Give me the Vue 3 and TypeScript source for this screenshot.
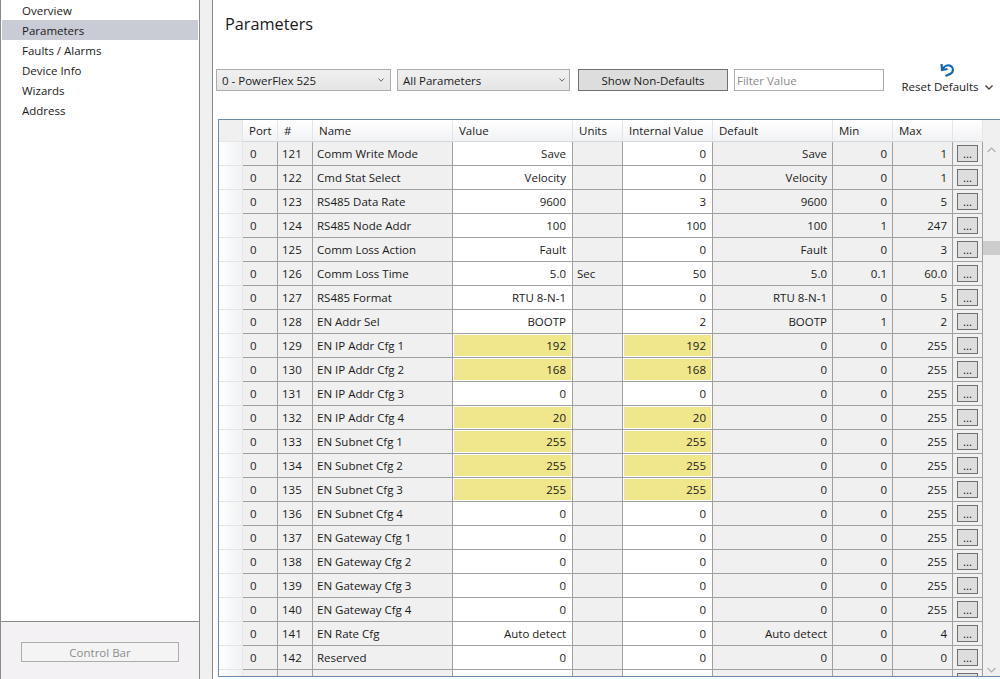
<template>
  <div class="app">
    <!-- Left nav -->
    <aside class="sidebar">
      <nav class="nav">
        <div
          v-for="item in navItems"
          :key="item"
          class="nav-item"
          :class="{ active: item === 'Parameters' }"
        >
          {{ item }}
        </div>
      </nav>
      <div class="control-area">
        <button class="control-btn" disabled>Control Bar</button>
      </div>
    </aside>

    <div class="gutter"></div>

    <main class="main">
      <h1 class="title">Parameters</h1>

      <!-- Toolbar -->
      <section class="toolbar">
        <div class="combo combo-device">
          <span>0 - PowerFlex 525</span>
          <svg class="combo-arrow" width="6" height="4" viewBox="0 0 6 4"><path d="M0.5 0.5 L3 3.2 L5.5 0.5" fill="none" stroke="#666" /></svg>
        </div>
        <div class="combo combo-filter">
          <span>All Parameters</span>
          <svg class="combo-arrow" width="6" height="4" viewBox="0 0 6 4"><path d="M0.5 0.5 L3 3.2 L5.5 0.5" fill="none" stroke="#666" /></svg>
        </div>
        <button class="show-btn">Show Non-Defaults</button>
        <div class="filter-input">Filter Value</div>
        <div class="reset">
          <svg class="reset-icon" width="16" height="16" viewBox="0 0 16 16">
            <path d="M2.6 2 L3 8 L8.5 7 M3.5 7 C5.5 4 9 2.3 12 4.2 C15 6.2 14.5 10 11.5 11.8 L6.5 14" fill="none" stroke="#1565b0" stroke-width="2.2" />
          </svg>
          <div class="reset-label">
            <span>Reset Defaults</span>
            <svg width="8" height="5" viewBox="0 0 8 5"><path d="M0.5 0.5 L4 4 L7.5 0.5" fill="none" stroke="#444" stroke-width="1.4" /></svg>
          </div>
        </div>
      </section>

      <!-- Grid -->
      <section class="grid-wrap">
        <div class="grid-body">
          <div class="row head">
            <div class="cell hdr rowhead"></div>
            <div v-for="c in columns" :key="c" class="cell hdr">{{ c }}</div>
            <div class="cell hdr"></div>
          </div>
          <div v-for="(p, i) in params" :key="i" class="row">
            <div class="cell rowhead"></div>
            <div class="cell ro left pad-port">{{ p.port }}</div>
            <div class="cell ro left">{{ p.num }}</div>
            <div class="cell ro left">{{ p.name }}</div>
            <div class="cell edit right" :class="{ changed: p.changed }"><span>{{ p.value }}</span></div>
            <div class="cell ro left">{{ p.units }}</div>
            <div class="cell edit right" :class="{ changed: p.changed }"><span>{{ p.internal }}</span></div>
            <div class="cell ro right">{{ p.def }}</div>
            <div class="cell ro right">{{ p.min }}</div>
            <div class="cell ro right">{{ p.max }}</div>
            <div class="cell ro btn-cell"><button class="more">{{ p.name ? '...' : '' }}</button></div>
          </div>
        </div>
        <div class="scrollbar">
          <svg class="sb-arrow up" width="9" height="6" viewBox="0 0 9 6"><path d="M0.5 5 L4.5 1 L8.5 5" fill="none" stroke="#b0b0b0" stroke-width="1.2" /></svg>
          <div class="sb-thumb"></div>
          <svg class="sb-arrow down" width="9" height="6" viewBox="0 0 9 6"><path d="M0.5 1 L4.5 5 L8.5 1" fill="none" stroke="#b0b0b0" stroke-width="1.2" /></svg>
        </div>
      </section>
    </main>
  </div>
</template>

<script setup lang="ts">
interface Param {
  port: string
  num: string
  name: string
  value: string
  units: string
  internal: string
  def: string
  min: string
  max: string
  changed: boolean
}

const navItems = ['Overview', 'Parameters', 'Faults / Alarms', 'Device Info', 'Wizards', 'Address']
const columns = ['Port', '#', 'Name', 'Value', 'Units', 'Internal Value', 'Default', 'Min', 'Max']

function p(
  num: number,
  name: string,
  value: string,
  internal: string,
  def: string,
  min: string,
  max: string,
  units = '',
  changed = false
): Param {
  return { port: '0', num: String(num), name, value, units, internal, def, min, max, changed }
}

// the last row is cut off by the bottom of the grid, so it has no visible text
const clippedRow: Param = {
  port: '',
  num: '',
  name: '',
  value: '',
  units: '',
  internal: '',
  def: '',
  min: '',
  max: '',
  changed: false
}

const params: Param[] = [
  p(121, 'Comm Write Mode', 'Save', '0', 'Save', '0', '1'),
  p(122, 'Cmd Stat Select', 'Velocity', '0', 'Velocity', '0', '1'),
  p(123, 'RS485 Data Rate', '9600', '3', '9600', '0', '5'),
  p(124, 'RS485 Node Addr', '100', '100', '100', '1', '247'),
  p(125, 'Comm Loss Action', 'Fault', '0', 'Fault', '0', '3'),
  p(126, 'Comm Loss Time', '5.0', '50', '5.0', '0.1', '60.0', 'Sec'),
  p(127, 'RS485 Format', 'RTU 8-N-1', '0', 'RTU 8-N-1', '0', '5'),
  p(128, 'EN Addr Sel', 'BOOTP', '2', 'BOOTP', '1', '2'),
  p(129, 'EN IP Addr Cfg 1', '192', '192', '0', '0', '255', '', true),
  p(130, 'EN IP Addr Cfg 2', '168', '168', '0', '0', '255', '', true),
  p(131, 'EN IP Addr Cfg 3', '0', '0', '0', '0', '255'),
  p(132, 'EN IP Addr Cfg 4', '20', '20', '0', '0', '255', '', true),
  p(133, 'EN Subnet Cfg 1', '255', '255', '0', '0', '255', '', true),
  p(134, 'EN Subnet Cfg 2', '255', '255', '0', '0', '255', '', true),
  p(135, 'EN Subnet Cfg 3', '255', '255', '0', '0', '255', '', true),
  p(136, 'EN Subnet Cfg 4', '0', '0', '0', '0', '255'),
  p(137, 'EN Gateway Cfg 1', '0', '0', '0', '0', '255'),
  p(138, 'EN Gateway Cfg 2', '0', '0', '0', '0', '255'),
  p(139, 'EN Gateway Cfg 3', '0', '0', '0', '0', '255'),
  p(140, 'EN Gateway Cfg 4', '0', '0', '0', '0', '255'),
  p(141, 'EN Rate Cfg', 'Auto detect', '0', 'Auto detect', '0', '4'),
  p(142, 'Reserved', '0', '0', '0', '0', '0'),
  clippedRow
]
</script>

<style>
html,
body {
  margin: 0;
  overflow: hidden;
}
</style>

<style scoped>
.app {
  display: flex;
  width: 1000px;
  height: 679px;
  overflow: hidden;
  background: #fff;
  color: #1a1a1a;
  font-family: "Open Sans", "Noto Sans", Arial, sans-serif;
  font-size: 11.5px;
}

/* Sidebar */
.sidebar {
  width: 200px;
  box-sizing: border-box;
  border-left: 1px solid #8a8a8a;
  border-right: 1px solid #8a8a8a;
  display: flex;
  flex-direction: column;
}
.nav {
  flex: 1;
  padding: 0 1px 0 1px;
}
.nav-item {
  height: 20px;
  line-height: 22px;
  padding-left: 20px;
}
.nav-item.active {
  background: #c9ccd5;
}
.control-area {
  height: 58px;
  box-sizing: border-box;
  border-top: 1px solid #8a8a8a;
  background: #f4f1f4;
  padding-top: 20px;
  display: flex;
  justify-content: center;
}
.control-btn {
  width: 158px;
  height: 20px;
  padding: 0;
  border: 1px solid #adadad;
  background: #f4f4f4;
  color: #8c8c8c;
  font: inherit;
}

.gutter {
  width: 12px;
  background: #f0f0f0;
  border-right: 1px solid #8a8a8a;
}

/* Main */
.main {
  flex: 1;
  min-width: 0;
  display: flex;
  flex-direction: column;
}
.title {
  margin: 12px 0 0 12px;
  height: 24px;
  line-height: 24px;
  font-size: 16.3px;
  font-weight: 400;
}
.toolbar {
  margin: 33px 0 0 3px;
  height: 22px;
  display: flex;
  align-items: flex-start;
}
.combo {
  box-sizing: border-box;
  height: 22px;
  border: 1px solid #acacac;
  background: linear-gradient(#f0f0f0, #e5e5e5);
  display: flex;
  align-items: center;
  justify-content: space-between;
  padding: 0 6px 0 5px;
}
.combo-device {
  width: 175px;
}
.combo-filter {
  width: 173px;
  margin-left: 6px;
  padding-right: 4px;
}
.show-btn {
  box-sizing: border-box;
  width: 150px;
  height: 22px;
  margin-left: 8px;
  padding: 0;
  border: 1px solid #707070;
  background: #dddddd;
  color: #1a1a1a;
  font: inherit;
}
.filter-input {
  box-sizing: border-box;
  width: 150px;
  height: 22px;
  line-height: 21px;
  margin-left: 6px;
  padding-left: 2px;
  border: 1px solid #acacac;
  color: #8c8c8c;
}
.reset {
  margin-left: 17px;
  margin-top: -7px;
  display: flex;
  flex-direction: column;
  align-items: center;
  width: 92px;
}
.reset-icon {
  display: block;
}
.reset-label {
  display: flex;
  align-items: center;
  gap: 6px;
  line-height: 16px;
  margin-top: 1px;
  white-space: nowrap;
}

/* Data grid */
.grid-wrap {
  margin: 28px 0 0 5px;
  height: 558px;
  box-sizing: border-box;
  border: 1px solid #688caf;
  border-right: none;
  display: flex;
  overflow: hidden;
}
.grid-body {
  width: 764px;
  flex: none;
}
.row {
  display: grid;
  grid-template-columns: 24px 35px 35px 140px 120px 50px 90px 120px 60px 60px 30px;
  height: 24px;
}
.row.head {
  height: 22px;
}
.cell {
  box-sizing: border-box;
  height: 100%;
  line-height: 23px;
  border-right: 1px solid #a0a0a0;
  border-bottom: 1px solid #a0a0a0;
  padding: 0 5px;
  white-space: nowrap;
  overflow: hidden;
}
.cell.hdr {
  line-height: 21px;
  padding-left: 6px;
  background: linear-gradient(#fff, #f1f2f4);
  border-right: 1px solid #e3e5e9;
  border-bottom: 1px solid #d5d7da;
}
.cell.rowhead {
  padding: 0;
  background: linear-gradient(90deg, #fff, #f1f2f4);
  border-right: 1px solid #e3e5e9;
  border-bottom: 1px solid #e3e5e9;
}
.cell.hdr.rowhead {
  background: #f0f0f0;
}
.ro {
  background: #f0f0f0;
}
.edit {
  background: #fff;
  padding-right: 6px;
}
.left {
  text-align: left;
  padding-left: 4px;
}
.pad-port {
  padding-left: 7px;
}
.right {
  text-align: right;
}
.edit.changed {
  padding: 1px;
  line-height: 21px;
}
.edit.changed span {
  display: block;
  height: 21px;
  background: #f0e68c;
  padding-right: 5px;
}
.btn-cell {
  padding: 3px 0 0 4px;
  line-height: normal;
}
.more {
  display: block;
  box-sizing: border-box;
  width: 21px;
  height: 17px;
  margin: 0;
  padding: 0;
  border: 1px solid #707070;
  background: #dddddd;
  color: #1a1a1a;
  font: inherit;
  line-height: 15px;
}

/* Scrollbar */
.scrollbar {
  flex: 1;
  position: relative;
  background: #f0f0f0;
}
.sb-arrow {
  position: absolute;
  left: 4px;
}
.sb-arrow.up {
  top: 27px;
}
.sb-arrow.down {
  top: 547px;
}
.sb-thumb {
  position: absolute;
  top: 121px;
  left: 0;
  right: 0;
  height: 14px;
  background: #cdcdcd;
}
</style>
